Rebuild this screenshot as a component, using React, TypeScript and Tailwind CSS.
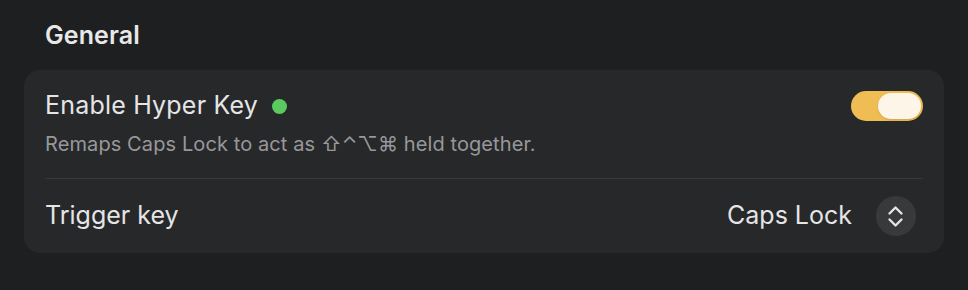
import React from "react";

const Toggle = ({ on }: { on: boolean }) => {
  return (
    <div className={"w-[72px] h-[30px] rounded-full p-[2px] flex " + (on ? "bg-[#f0bd55] justify-end" : "bg-[#3a3b3d] justify-start")}>
      <div className="h-[26px] w-[43px] rounded-full bg-[#fdf6e8] shadow-sm" />
    </div>
  );
};

const Stepper = () => (
  <div className="w-10 h-10 rounded-full bg-[#38393b] flex items-center justify-center">
    <svg width="40" height="40" viewBox="0 0 40 40" fill="none">
      <path d="M13.5 17.5 L19.5 11.5 L25.5 17.5" stroke="#e4e4e4" strokeWidth="2.4" strokeLinecap="round" strokeLinejoin="round" />
      <path d="M13.5 23.5 L19.5 29.5 L25.5 23.5" stroke="#e4e4e4" strokeWidth="2.4" strokeLinecap="round" strokeLinejoin="round" />
    </svg>
  </div>
);

const App = () => {
  const [enabled] = React.useState(true);

  return (
    <div
      className="w-full h-[290px] bg-[#1e1f21] px-6 pt-[20px] text-[#e5e5e6] antialiased"
      style={{ fontFamily: "Inter, 'DejaVu Sans', sans-serif" }}
    >
      <h2 className="pl-[21px] text-[25px] font-semibold leading-[30px] tracking-[0.1px] text-[#e8e8e9]">General</h2>

      <div className="mt-[20px] rounded-[16px] bg-[#27282a] px-[21px]">
        {/* hyper key row */}
        <div className="pt-[19px] pb-[22px] flex items-start justify-between">
          <div className="flex flex-col">
            <div className="flex items-center gap-[14px] h-[34px]">
              <span className="text-[25px] tracking-[0.2px]">Enable Hyper Key</span>
              <span className="w-[15px] h-[15px] rounded-full bg-[#5ac95f]" />
            </div>
            <p className="mt-[9px] text-[20px] leading-[24px] tracking-[0.1px] text-[#98989b]">
              Remaps Caps Lock to act as ⇧⌃⌥⌘ held together.
            </p>
          </div>
          <div className="pt-[2px]">
            <Toggle on={enabled} />
          </div>
        </div>

        <div className="h-px bg-[#38393b]" />

        {/* trigger key row */}
        <div className="h-[74px] flex items-center justify-between">
          <span className="text-[25px]">Trigger key</span>
          <div className="flex items-center gap-[24px] pr-[7px]">
            <span className="text-[25px]">Caps Lock</span>
            <Stepper />
          </div>
        </div>
      </div>
    </div>
  );
};

export default App;
